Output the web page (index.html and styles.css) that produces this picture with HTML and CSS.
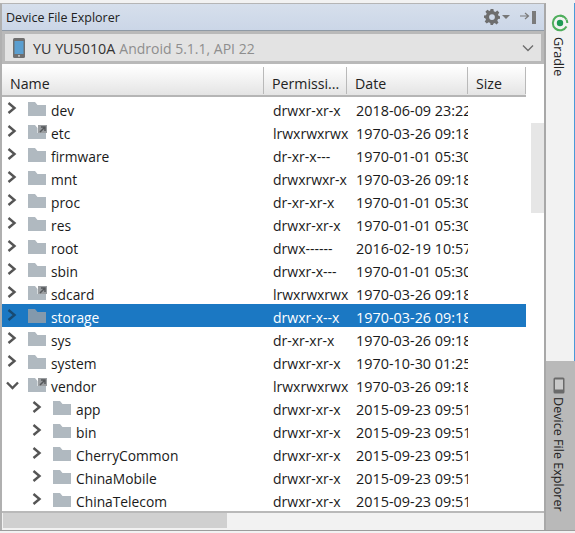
FILE: index.html
```html
<!DOCTYPE html>
<html lang="en">
<head>
	<meta charset="UTF-8">
	<title>Device File Explorer</title>
	<link rel="stylesheet" href="styles.css">
</head>
<body>
	<svg class="defs" width="0" height="0">
		<symbol id="folder" viewBox="0 0 18 14">
			<path d="M0 0H7L9.5 3H18V14H0Z" fill="currentColor"/>
		</symbol>
		<symbol id="link" viewBox="0 0 19 14">
			<path d="M0 0H7L9.5 3V8H18V14H0Z" fill="currentColor"/>
			<rect x="10" y="0" width="9" height="8" fill="#9a9da0"/>
			<path d="M12 7L16.5 2.5M13 2H17V6" fill="none" stroke="#55585b" stroke-width="1.5"/>
		</symbol>
		<symbol id="closed" viewBox="0 0 10 14">
			<path d="M1.5 2L7.5 7L1.5 12" fill="none" stroke="currentColor" stroke-width="2.4"/>
		</symbol>
		<symbol id="open" viewBox="0 0 13 10">
			<path d="M1 1.5L6.5 7L12 1.5" fill="none" stroke="currentColor" stroke-width="2.4"/>
		</symbol>
	</svg>

	<div class="window">
		<div class="panel">
			<div class="title-bar">
				<span class="title-text">Device File Explorer</span>
				<svg class="gear" width="16" height="16" viewBox="0 0 16 16">
					<path d="M6.6 0H9.4L9.8 2.2L11.4 2.9L13.3 1.6L15.3 3.6L14 5.5L14.7 7L16 7.3V9.7L14 10.1L13.3 11.7L14.5 13.5L12.6 15.4L10.8 14.1L9.3 14.7L9 16H6.6L6.2 14L4.6 13.3L2.7 14.6L0.7 12.6L2 10.7L1.3 9.2L0 8.8V6.6L2 6.2L2.7 4.6L1.4 2.7L3.4 0.7L5.3 2L6.2 1.4ZM8 5.2A2.9 2.9 0 1 0 8 11A2.9 2.9 0 1 0 8 5.2Z" fill="#6e6e6e" fill-rule="evenodd"/>
				</svg>
				<span class="gear-caret"></span>
				<svg class="hide-icon" width="17" height="15" viewBox="0 0 17 15">
					<path d="M0 6H8M5 3L8.5 6L5 9" fill="none" stroke="#7b7b7b" stroke-width="1.2"/>
					<rect x="12" y="1" width="4" height="13" fill="#7b7b7b"/>
				</svg>
			</div>

			<div class="device-select">
				<svg class="phone" width="12" height="20" viewBox="0 0 12 20">
					<rect width="12" height="20" rx="1.5" fill="#6f6f6f"/>
					<rect x="1.5" y="3" width="9" height="13" fill="#5b9fd0"/>
					<rect x="5" y="17.3" width="2" height="1.2" fill="#ddd"/>
				</svg>
				<span class="device-name">YU YU5010A</span>
				<span class="device-info">Android 5.1.1, API 22</span>
				<svg class="select-arrow" width="12" height="8" viewBox="0 0 12 8">
					<path d="M1 1.5L6 6.5L11 1.5" fill="none" stroke="#6e6e6e" stroke-width="1.4"/>
				</svg>
			</div>

			<div class="table-area">
				<div class="table-main">
					<div class="head row-grid">
						<div class="head-cell">Name</div>
						<div class="head-cell">Permissi...</div>
						<div class="head-cell">Date</div>
						<div class="head-cell">Size</div>
					</div>
					<div class="rows">
						<div class="row row-grid">
							<div class="name"><svg class="arrow"><use href="#closed"/></svg><svg class="folder"><use href="#folder"/></svg>dev</div>
							<div class="cell perm">drwxr-xr-x</div><div class="cell date">2018-06-09 23:22</div>
						</div>
						<div class="row row-grid">
							<div class="name"><svg class="arrow"><use href="#closed"/></svg><svg class="folder is-link"><use href="#link"/></svg>etc</div>
							<div class="cell perm">lrwxrwxrwx</div><div class="cell date">1970-03-26 09:18</div>
						</div>
						<div class="row row-grid">
							<div class="name"><svg class="arrow"><use href="#closed"/></svg><svg class="folder"><use href="#folder"/></svg>firmware</div>
							<div class="cell perm">dr-xr-x---</div><div class="cell date">1970-01-01 05:30</div>
						</div>
						<div class="row row-grid">
							<div class="name"><svg class="arrow"><use href="#closed"/></svg><svg class="folder"><use href="#folder"/></svg>mnt</div>
							<div class="cell perm">drwxrwxr-x</div><div class="cell date">1970-03-26 09:18</div>
						</div>
						<div class="row row-grid">
							<div class="name"><svg class="arrow"><use href="#closed"/></svg><svg class="folder"><use href="#folder"/></svg>proc</div>
							<div class="cell perm">dr-xr-xr-x</div><div class="cell date">1970-01-01 05:30</div>
						</div>
						<div class="row row-grid">
							<div class="name"><svg class="arrow"><use href="#closed"/></svg><svg class="folder"><use href="#folder"/></svg>res</div>
							<div class="cell perm">drwxr-xr-x</div><div class="cell date">1970-01-01 05:30</div>
						</div>
						<div class="row row-grid">
							<div class="name"><svg class="arrow"><use href="#closed"/></svg><svg class="folder"><use href="#folder"/></svg>root</div>
							<div class="cell perm">drwx------</div><div class="cell date">2016-02-19 10:57</div>
						</div>
						<div class="row row-grid">
							<div class="name"><svg class="arrow"><use href="#closed"/></svg><svg class="folder"><use href="#folder"/></svg>sbin</div>
							<div class="cell perm">drwxr-x---</div><div class="cell date">1970-01-01 05:30</div>
						</div>
						<div class="row row-grid">
							<div class="name"><svg class="arrow"><use href="#closed"/></svg><svg class="folder is-link"><use href="#link"/></svg>sdcard</div>
							<div class="cell perm">lrwxrwxrwx</div><div class="cell date">1970-03-26 09:18</div>
						</div>
						<div class="row row-grid selected">
							<div class="name"><svg class="arrow"><use href="#closed"/></svg><svg class="folder"><use href="#folder"/></svg>storage</div>
							<div class="cell perm">drwxr-x--x</div><div class="cell date">1970-03-26 09:18</div>
						</div>
						<div class="row row-grid">
							<div class="name"><svg class="arrow"><use href="#closed"/></svg><svg class="folder"><use href="#folder"/></svg>sys</div>
							<div class="cell perm">dr-xr-xr-x</div><div class="cell date">1970-03-26 09:18</div>
						</div>
						<div class="row row-grid">
							<div class="name"><svg class="arrow"><use href="#closed"/></svg><svg class="folder"><use href="#folder"/></svg>system</div>
							<div class="cell perm">drwxr-xr-x</div><div class="cell date">1970-10-30 01:25</div>
						</div>
						<div class="row row-grid">
							<div class="name"><svg class="arrow arrow-open"><use href="#open"/></svg><svg class="folder is-link"><use href="#link"/></svg>vendor</div>
							<div class="cell perm">lrwxrwxrwx</div><div class="cell date">1970-03-26 09:18</div>
						</div>
						<div class="row row-grid">
							<div class="name child"><svg class="arrow"><use href="#closed"/></svg><svg class="folder"><use href="#folder"/></svg>app</div>
							<div class="cell perm">drwxr-xr-x</div><div class="cell date">2015-09-23 09:51</div>
						</div>
						<div class="row row-grid">
							<div class="name child"><svg class="arrow"><use href="#closed"/></svg><svg class="folder"><use href="#folder"/></svg>bin</div>
							<div class="cell perm">drwxr-xr-x</div><div class="cell date">2015-09-23 09:51</div>
						</div>
						<div class="row row-grid">
							<div class="name child"><svg class="arrow"><use href="#closed"/></svg><svg class="folder"><use href="#folder"/></svg>CherryCommon</div>
							<div class="cell perm">drwxr-xr-x</div><div class="cell date">2015-09-23 09:51</div>
						</div>
						<div class="row row-grid">
							<div class="name child"><svg class="arrow"><use href="#closed"/></svg><svg class="folder"><use href="#folder"/></svg>ChinaMobile</div>
							<div class="cell perm">drwxr-xr-x</div><div class="cell date">2015-09-23 09:51</div>
						</div>
						<div class="row row-grid">
							<div class="name child"><svg class="arrow"><use href="#closed"/></svg><svg class="folder"><use href="#folder"/></svg>ChinaTelecom</div>
							<div class="cell perm">drwxr-xr-x</div><div class="cell date">2015-09-23 09:51</div>
						</div>
					</div>
				</div>
				<div class="v-scroll"><div class="v-thumb"></div></div>
			</div>

			<div class="h-scroll"><div class="h-thumb"></div></div>
		</div>

		<div class="side-strip">
			<div class="side-tab gradle-tab">
				<svg width="18" height="18" viewBox="0 0 18 18">
					<path d="M15.5 5.5A7.3 7.3 0 1 0 15.5 12.5" fill="none" stroke="#4fae5c" stroke-width="2"/>
					<path d="M9 1.7A7.3 7.3 0 0 1 16.3 9" fill="none" stroke="#4fae5c" stroke-width="2" stroke-dasharray="4 4"/>
					<circle cx="9" cy="9" r="3.2" fill="#1f9a55"/>
				</svg>
				<span class="side-label gradle-label">Gradle</span>
			</div>
			<div class="side-tab explorer-tab">
				<svg width="12" height="17" viewBox="0 0 12 17">
					<rect x="0.5" y="0.5" width="11" height="16" rx="1.5" fill="#6a6a6a"/>
					<rect x="2" y="2.5" width="8" height="10" fill="#c9c9c9"/>
				</svg>
				<span class="side-label">Device File Explorer</span>
			</div>
		</div>
	</div>
</body>
</html>
```

FILE: styles.css
```css
html,body{margin:0;padding:0;height:100%;background:#f2f2f2;}
body{font-family:"Open Sans","Noto Sans",sans-serif;font-size:13.8px;color:#1a1a1a;overflow:hidden;}
.defs{display:block;height:0;}

.window{display:flex;width:575px;height:531px;padding-top:3px;box-sizing:border-box;border-bottom:1px solid #9c9c9c;}
.panel{width:546px;display:flex;flex-direction:column;border-right:2px solid #a8a8a8;border-left:2px solid #b0b0b0;border-top:1px solid #b5b5b5;box-sizing:border-box;background:#fff;}

.title-bar{height:27px;flex:none;display:flex;align-items:center;padding:0 7px 0 4px;background:linear-gradient(#d6dfec,#cbd6e7);border-bottom:1px solid #8f9aa6;box-sizing:border-box;}
.title-text{font-size:12.5px;flex:1;color:#222;}
.gear{margin-right:2px;}
.gear-caret{width:0;height:0;border:4px solid transparent;border-top-color:#777;border-bottom:0;margin-right:10px;}

.device-select{height:33px;flex:none;display:flex;align-items:center;background:#e3e3e3;border:3px solid #b9b9b9;box-sizing:border-box;padding:0 7px 0 8px;}
.phone{margin-right:8px;}
.device-name{margin:2px 4px 0 0;font-size:14.3px;color:#333;}
.device-info{flex:1;margin-top:2px;font-size:14px;color:#8e8e8e;}

.table-area{flex:1;display:flex;min-height:0;margin-top:2px;}
.table-main{width:529px;flex:none;display:flex;flex-direction:column;overflow:hidden;}
.row-grid{display:grid;grid-template-columns:262px 83px 121px 58px;width:524px;}
.head{height:31px;flex:none;box-sizing:border-box;background:linear-gradient(#fff,#e4e4e4);border-bottom:2px solid #b5b5b5;}
.head-cell{display:flex;align-items:center;padding:6px 0 0 8px;border-right:1px solid #b9b9b9;font-size:14.2px;color:#222;box-sizing:border-box;margin:1px 0;}
.rows{height:414px;overflow:hidden;}
.row{height:23px;line-height:27px;}
.name{display:flex;align-items:flex-start;height:23px;color:#1a1a1a;}
.name.child{padding-left:25px;}
.arrow{width:10px;height:14px;margin:4px 11px 0 5px;flex:none;color:#555;}
.arrow-open{width:13px;height:10px;margin:8px 9px 0 4px;}
.folder{width:18px;height:14px;margin:5px 5px 0 0;flex:none;color:#b0b9c0;}
.folder.is-link{width:19px;margin-right:4px;}
.cell{padding-left:9px;white-space:nowrap;overflow:hidden;font-size:14.4px;}
.perm{font-size:14px;overflow:visible;}
.selected{background:#1b78c3;color:#fff;}
.selected .name{color:#fff;}
.selected .arrow{color:#184a72;}
.selected .folder{color:#8399ac;}

.v-scroll{flex:1;background:#fff;padding-top:57px;}
.v-thumb{height:90px;background:#e6e6e6;}

.h-scroll{height:19px;flex:none;box-sizing:border-box;border-top:2px solid #b9b9b9;background:#f2f2f2;}
.h-thumb{width:224px;height:15px;background:#d0d0d0;margin-left:1px;}

.side-strip{flex:1;display:flex;flex-direction:column;justify-content:space-between;}
.side-tab{display:flex;flex-direction:column;align-items:center;gap:3px;}
.gradle-tab{padding-top:11px;flex:1;border-right:1px solid #4a9ad8;}
.gradle-label{margin:2px 4px 0 0;}
.explorer-tab{height:169px;background:#b9b9b9;padding:16px 4px 0 0;box-sizing:border-box;}
.side-label{writing-mode:vertical-rl;font-size:12.6px;color:#222;}
```
